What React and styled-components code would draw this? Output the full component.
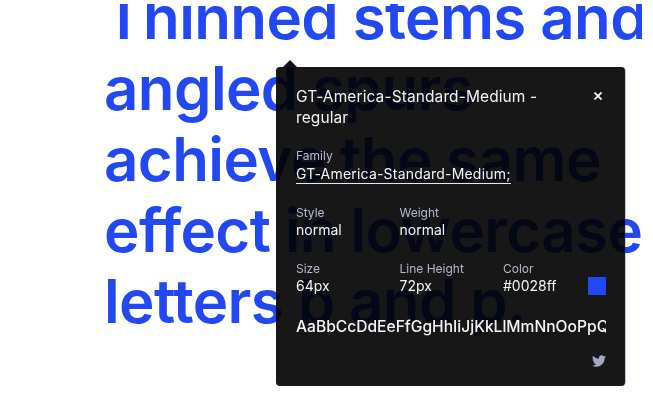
import React from 'react';
import styled, { createGlobalStyle } from 'styled-components';
import { FaTwitter } from 'react-icons/fa';

const GlobalStyle = createGlobalStyle`
  html, body {
    margin: 0;
    padding: 0;
    background: #fff;
    overflow: hidden;
  }
`;

const Page = styled.div`
  position: relative;
  isolation: isolate;
  width: 653px;
  height: 403px;
  overflow: hidden;
  background: #fff;
  padding-top: 4px;
  box-sizing: border-box;
  font-family: Inter, "Liberation Sans", sans-serif;
`;

const Specimen = styled.div`
  width: 538px;
  height: 399px;
  margin-left: 104px;
  overflow: hidden;
`;

const SpecimenText = styled.div`
  margin-top: -22px;
  color: #2148f2;
  font-size: 60px;
  line-height: 71px;
  font-weight: 590;
  letter-spacing: -0.6px;
  white-space: nowrap;
`;

const Popover = styled.div`
  position: absolute;
  left: 276px;
  top: 67px;
  width: 349px;
  height: 319px;
  color: #fff;

  /* multiply so the specimen reads as darker letters through the panel */
  &::after {
    content: '';
    position: absolute;
    inset: 0;
    background: #171717;
    border-radius: 4px;
    box-shadow: 1px 0 0 #c9cfe8;
    mix-blend-mode: multiply;
  }

  &::before {
    content: '';
    position: absolute;
    left: 7px;
    top: -7px;
    border-left: 7px solid transparent;
    border-right: 7px solid transparent;
    border-bottom: 7px solid #141414;
  }
`;

const PopoverBody = styled.div`
  position: relative;
  z-index: 1;
  height: 100%;
  box-sizing: border-box;
  padding: 19px 19px 0 20px;
  display: flex;
  flex-direction: column;
`;

const Header = styled.div`
  display: flex;
  justify-content: space-between;
  align-items: flex-start;
`;

const Title = styled.div`
  width: 270px;
  font-size: 15.5px;
  line-height: 21px;
  letter-spacing: 0.1px;
  color: #f2f2f6;
`;

const Close = styled.svg`
  width: 8px;
  height: 8px;
  margin: 6px 4px 0 0;
  stroke: #fff;
  stroke-width: 1.8;
`;

const Label = styled.div`
  font-size: 12px;
  line-height: 15px;
  color: #b4b8d0;
`;

const Value = styled.div`
  font-size: 14px;
  line-height: 20px;
  color: #f5f5f8;
`;

const FamilyBlock = styled.div`
  margin-top: 20px;
`;

const FamilyLink = styled(Value)`
  display: inline-block;
  margin-top: 2px;
  line-height: 18px;
  letter-spacing: 0.2px;
  border-bottom: 1px solid #e6e8f5;
`;

const Row = styled.div`
  display: grid;
  grid-template-columns: 103.5px 103.5px 1fr;
  margin-top: ${props => props.$gap}px;
`;

const ColorValue = styled.div`
  display: flex;
  justify-content: space-between;
  align-items: center;
`;

const Swatch = styled.div`
  width: 18px;
  height: 18px;
  background: #2148f2;
`;

const Alphabet = styled.div`
  margin-top: 21px;
  width: 310px;
  overflow: hidden;
  white-space: nowrap;
  font-size: 15.6px;
  line-height: 20px;
  font-weight: 500;
  color: #f5f5f8;
`;

const Footer = styled.div`
  display: flex;
  justify-content: flex-end;
  margin-top: 17px;
  color: #a5a8c0;
  font-size: 14px;
`;

const App = () => (
  <Page>
    <GlobalStyle />
    <Specimen>
      <SpecimenText>
        Thinned stems and
        <br />
        angled spurs
        <br />
        achieve the same
        <br />
        effect in lowercase
        <br />
        letters b and p.
      </SpecimenText>
    </Specimen>
    <Popover>
      <PopoverBody>
        <Header>
          <Title>GT-America-Standard-Medium - regular</Title>
          <Close viewBox="0 0 8 8">
            <path d="M0.5 0.5L7.5 7.5M7.5 0.5L0.5 7.5" />
          </Close>
        </Header>
        <FamilyBlock>
          <Label>Family</Label>
          <FamilyLink>GT-America-Standard-Medium;</FamilyLink>
        </FamilyBlock>
        <Row $gap={21}>
          <div>
            <Label>Style</Label>
            <Value>normal</Value>
          </div>
          <div>
            <Label>Weight</Label>
            <Value>normal</Value>
          </div>
        </Row>
        <Row $gap={21}>
          <div>
            <Label>Size</Label>
            <Value>64px</Value>
          </div>
          <div>
            <Label>Line Height</Label>
            <Value>72px</Value>
          </div>
          <div>
            <Label>Color</Label>
            <ColorValue>
              <Value>#0028ff</Value>
              <Swatch />
            </ColorValue>
          </div>
        </Row>
        <Alphabet>AaBbCcDdEeFfGgHhIiJjKkLlMmNnOoPpQqRrSsTtUuVvWwXxYyZz</Alphabet>
        <Footer>
          <FaTwitter />
        </Footer>
      </PopoverBody>
    </Popover>
  </Page>
);

export default App;
